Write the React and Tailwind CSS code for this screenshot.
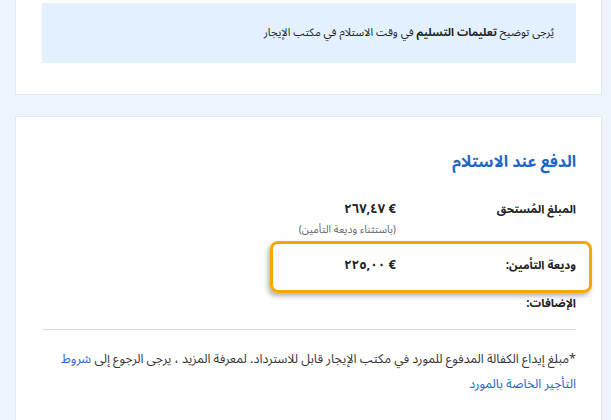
import React from 'react'

function Row({ label, value, note }) {
  return (
    <div className="flex items-start">
      <div className="w-[180px] shrink-0 font-bold text-[11.5px] leading-[18px] text-[#222]">{label}</div>
      <div>
        <div className="font-bold text-[13px] leading-[18px] text-[#222]">{value}</div>
        {note && <div className="mt-[5px] text-[10.5px] leading-[14px] text-[#666]">{note}</div>}
      </div>
    </div>
  )
}

function App() {
  return (
    <div dir="rtl" className="min-h-screen bg-[#eef4fc] pl-[15px] pr-[9px] font-['Noto_Sans_Arabic','DejaVu_Sans',sans-serif] text-[11px] text-[#222] overflow-hidden h-[420px]">
      {/* delivery card */}
      <div className="bg-white border border-[#e3e8ef] border-t-0 pl-[26px] pr-[25px] pt-[3px] pb-[31px]">
        <div className="bg-[#e3f0fd] h-[60px] flex items-center pr-[22px]">
          <p className="leading-[18px]">
            يُرجى توضيح <span className="font-bold">تعليمات التسليم</span> في وقت الاستلام في مكتب الإيجار
          </p>
        </div>
      </div>

      {/* payment card */}
      <div className="mt-[21px] bg-white border border-[#e3e8ef] pl-[26px] pr-[25px] pt-[32px] pb-[30px]">
        <h2 className="text-[16px] font-bold text-[#1b66c9] leading-[26px]">الدفع عند الاستلام</h2>

        <div className="mt-[25px]">
          <Row label="المبلغ المُستحق" value="€ ٢٦٧,٤٧" note="(باستثناء وديعة التأمين)" />
        </div>

        <div className="mt-[4px] -mr-[16px] w-[322px] h-[52px] border-[3px] border-[#f5a800] rounded-[8px] shadow-[-2px_3px_5px_rgba(0,0,0,0.3)] pr-[13px] pt-[12px]">
          <Row label="وديعة التأمين:" value="€ ٢٢٥,٠٠" />
        </div>

        <div className="mt-px font-bold text-[11.5px] leading-[18px]">الإضافات:</div>

        <hr className="mt-[17px] border-t border-[#dcdcdc]" />

        <p className="mt-[17px] text-[12.5px] leading-[25px] text-[#333]">
          *مبلغ إيداع الكفالة المدفوع للمورد في مكتب الإيجار قابل للاسترداد. لمعرفة المزيد ، يرجى الرجوع إلى{' '}
          <a className="text-[#1b66c9]">شروط<br />التأجير الخاصة بالمورد</a>
        </p>
      </div>
    </div>
  )
}

export default App
